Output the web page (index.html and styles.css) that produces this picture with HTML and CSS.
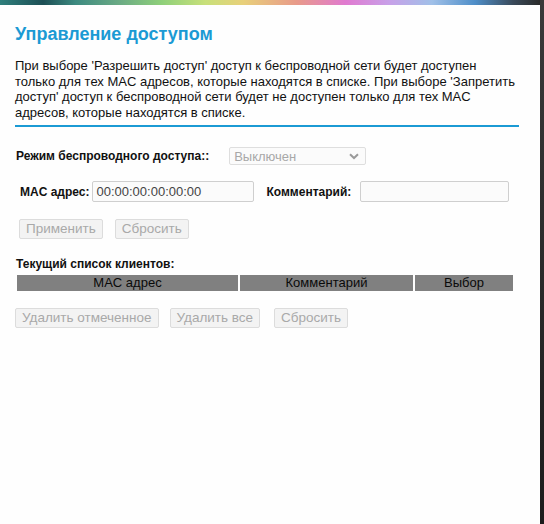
FILE: index.html
```html
<!DOCTYPE html>
<html lang="ru">
<head>
<meta charset="utf-8">
<title>Управление доступом</title>
<link rel="stylesheet" href="styles.css">
</head>
<body>
<div class="frame">
  <div class="page">
    <div class="topbar"></div>
    <div class="content">
      <h1 class="title">Управление доступом</h1>
      <p class="intro">При выборе 'Разрешить доступ' доступ к беспроводной сети будет доступен<br>только для тех MAC адресов, которые находятся в списке. При выборе 'Запретить<br>доступ' доступ к беспроводной сети будет не доступен только для тех MAC<br>адресов, которые находятся в списке.</p>
      <div class="rule"></div>

      <div class="row mode-row">
        <span class="label">Режим беспроводного доступа::</span>
        <div class="select">
          <span>Выключен</span>
          <svg class="chev" width="10" height="7" viewBox="0 0 10 7"><path d="M1 1.2 L5 5 L9 1.2" fill="none" stroke="#9a9a9a" stroke-width="2"/></svg>
        </div>
      </div>

      <div class="row mac-row">
        <span class="label">MAC адрес:</span>
        <div class="input mac">00:00:00:00:00:00</div>
        <span class="label comment-label">Комментарий:</span>
        <div class="input comment"></div>
      </div>

      <div class="row btn-row first-btns">
        <span class="btn">Применить</span>
        <span class="btn">Сбросить</span>
      </div>

      <div class="list-title label">Текущий список клиентов:</div>
      <div class="table">
        <div class="th c1">MAC адрес</div>
        <div class="th c2">Комментарий</div>
        <div class="th c3">Выбор</div>
      </div>

      <div class="row btn-row second-btns">
        <span class="btn">Удалить отмеченное</span>
        <span class="btn">Удалить все</span>
        <span class="btn">Сбросить</span>
      </div>
    </div>
  </div>
  <div class="edge"></div>
</div>
</body>
</html>
```
FILE: styles.css
```css
html, body {
  margin: 0;
  padding: 0;
  height: 100%;
  background: #fefefe;
}
body {
  font-family: "Liberation Sans", Arial, sans-serif;
  color: #111;
}
.frame {
  display: flex;
  height: 524px;
  width: 544px;
}
.page {
  width: 540px;
  background: #fefefe;
}
.edge {
  width: 4px;
  background: linear-gradient(to bottom, #3a3a3a, #1c1c1c);
}
.topbar {
  height: 5px;
  background: linear-gradient(to right, #2f7f7c 0%, #1d4f55 8%, #3d8a80 14%, #6aaa84 22%, #8fd07a 30%, #c8e07a 38%, #e8d07a 45%, #e89a8a 55%, #e07ad0 64%, #c8a0e8 72%, #a0c0e8 80%, #4e8ec8 88%, #3a4a5a 95%, #2a2a2a 100%);
}
.content {
  padding: 0 0 0 15px;
}
.title {
  margin: 17px 0 0 0;
  font-size: 18px;
  font-weight: bold;
  color: #1b9ad4;
  line-height: 24px;
}
.intro {
  margin: 12px 0 0 0;
  font-size: 13px;
  line-height: 15.5px;
  white-space: nowrap;
  color: #111;
}
.rule {
  margin-top: 5px;
  width: 504px;
  height: 2px;
  background: #1b9ad4;
}
.row {
  display: flex;
  align-items: center;
}
.label {
  font-size: 12px;
  font-weight: bold;
  color: #111;
}
.mode-row {
  margin-top: 20px;
  padding-left: 1px;
}
.select {
  margin-left: 20px;
  width: 137px;
  height: 18px;
  box-sizing: border-box;
  border: 1px solid #dedede;
  border-radius: 2px;
  background: #fbfbfb;
  display: flex;
  align-items: center;
  justify-content: space-between;
  padding: 0 6px 0 4px;
  font-size: 13px;
  color: #a8a8a8;
}
.mac-row {
  margin-top: 16px;
  padding-left: 5px;
}
.input {
  box-sizing: border-box;
  height: 21px;
  border: 1px solid #cfcfcf;
  border-radius: 2px;
  background: #fbfbfb;
  font-size: 13px;
  line-height: 19px;
  padding: 0 3px;
  color: #444;
}
.mac {
  margin-left: 3px;
  width: 162px;
}
.comment-label {
  margin-left: 12px;
}
.comment {
  margin-left: 9px;
  width: 149px;
}
.btn-row {
  gap: 12px;
}
.btn {
  display: inline-block;
  box-sizing: border-box;
  height: 20px;
  line-height: 18px;
  border: 1px solid #dcdcdc;
  border-radius: 2px;
  background: #f3f3f3;
  color: #a9a9a9;
  font-size: 13.5px;
  padding: 0 6px;
}
.first-btns {
  margin-top: 17px;
  padding-left: 4px;
}
.list-title {
  margin-top: 18px;
  padding-left: 1px;
  line-height: 14px;
}
.table {
  display: grid;
  grid-template-columns: 221px 173px 98px;
  column-gap: 2px;
  margin-top: 4px;
  margin-left: 2px;
}
.th {
  background: #808080;
  height: 16px;
  line-height: 16px;
  text-align: center;
  font-size: 13px;
  color: #0a0a0a;
}
.second-btns {
  margin-top: 17px;
  gap: 11px;
}
.second-btns .btn:last-child {
  margin-left: 3px;
}
```
